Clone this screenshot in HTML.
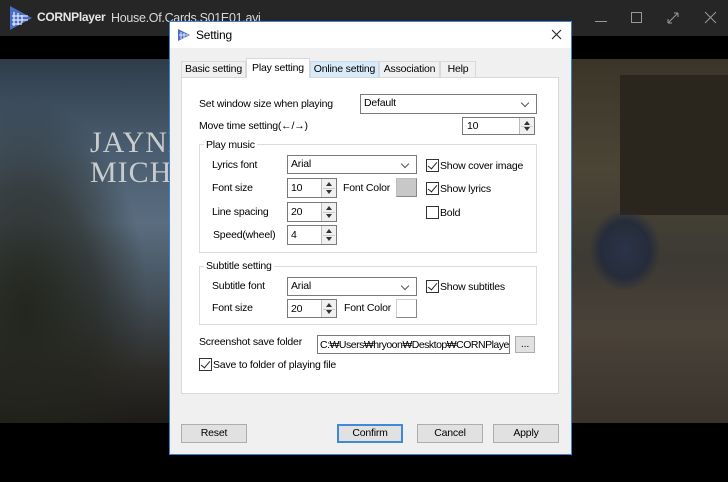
<!DOCTYPE html>
<html><head><meta charset="utf-8"><style>
*{box-sizing:border-box;margin:0;padding:0}
body{width:728px;height:482px;overflow:hidden;background:#000;position:relative;font-family:"Liberation Sans",sans-serif;font-size:10.5px;letter-spacing:-0.2px;color:#000}
.a{position:absolute}
.t{position:absolute;white-space:nowrap;line-height:13px}
.box{position:absolute;background:#fff;border:1px solid #7a7a7a}
.combo::after{content:"";position:absolute;right:8px;top:5px;width:5px;height:5px;border-right:1px solid #555;border-bottom:1px solid #555;transform:rotate(45deg)}
.spin{position:absolute;background:#fff;border:1px solid #7a7a7a}
.spin .b{position:absolute;right:0;top:0;width:15px;height:100%;border-left:1px solid #bbb;background:#f0f0f0}
.spin .b::before{content:"";position:absolute;left:4px;top:3px;border:3px solid transparent;border-bottom:4px solid #333;border-top:0}
.spin .b::after{content:"";position:absolute;left:4px;bottom:3px;border:3px solid transparent;border-top:4px solid #333;border-bottom:0}
.spin .b i{position:absolute;left:1px;right:1px;top:50%;border-top:1px solid #ccc}
.cb{position:absolute;width:13px;height:13px;border:1px solid #333;background:#fff}
.cb.on::after{content:"";position:absolute;left:3px;top:0px;width:4px;height:8px;border-right:1.5px solid #222;border-bottom:1.5px solid #222;transform:rotate(40deg)}
.grp{position:absolute;border:1px solid #dcdcdc}
.btn{position:absolute;background:#e1e1e1;border:1px solid #adadad;text-align:center;line-height:16px}
.tab{position:absolute;border:1px solid #d9d9d9;border-bottom:none;background:#f0f0f0;text-align:center;line-height:15px;white-space:nowrap;overflow:hidden}
</style></head><body>
<!-- top bar -->
<div class="a" style="left:0;top:0;width:728px;height:36px;background:#262626"></div>
<svg class="a" style="left:8px;top:4px" width="26" height="28" viewBox="0 0 26 28"><path d="M2 2 L24 14 L2 26 Z" fill="#4a6fc4"/><path d="M6 8 L6 22 M10 9 L10 21 M14 11 L14 19 M4 12 L20 12 M4 16 L20 16 M4 20 L14 20" stroke="#dfe8ff" stroke-width="1.3"/></svg>
<div class="t" style="left:37px;top:11px;color:#e6e6e6;font-size:12px;font-weight:bold;letter-spacing:-0.3px">CORNPlayer</div>
<div class="t" style="left:111px;top:12px;color:#d8d8d8;font-size:12.5px;letter-spacing:-0.3px">House.Of.Cards.S01E01.avi</div>
<div class="a" style="left:595px;top:21px;width:12px;border-top:1px solid #999"></div>
<div class="a" style="left:631px;top:12px;width:11px;height:11px;border:1px solid #999"></div>
<svg class="a" style="left:666px;top:11px" width="14" height="14"><path d="M2 12 L12 2 M2 12 L2 8 M2 12 L6 12 M12 2 L8 2 M12 2 L12 6" stroke="#999" fill="none"/></svg>
<svg class="a" style="left:704px;top:11px" width="13" height="13"><path d="M1 1 L12 12 M12 1 L1 12" stroke="#999"/></svg>
<!-- video -->
<div class="a" style="left:0;top:59px;width:728px;height:364px;background:linear-gradient(180deg,#2f3d4a 0%,#4a5d70 25%,#5a6d80 45%,#44505a 65%,#2e2c29 85%,#1d1b18 100%)"></div>
<div class="a" style="left:0;top:59px;width:170px;height:364px;background:radial-gradient(ellipse at 15% 70%,#23261d 0%,rgba(35,36,28,.6) 35%,transparent 60%)"></div>
<div class="a" style="left:572px;top:59px;width:156px;height:364px;background:linear-gradient(180deg,#3a3528 0%,#4b4536 30%,#3c3a33 55%,#4a4239 75%,#3a332c 100%)"></div>
<div class="a" style="left:620px;top:75px;width:108px;height:140px;background:#2a261d"></div>
<div class="a" style="left:590px;top:210px;width:70px;height:80px;background:radial-gradient(ellipse,#2a3448 0%,#262c3a 50%,transparent 72%)"></div>
<div class="t" style="left:90px;top:128px;color:#c9ccce;font-family:'Liberation Serif',serif;font-size:30px;line-height:30px;letter-spacing:1px">JAYNE<br>MICHI</div>
<!-- dialog -->
<div class="a" style="left:169px;top:21px;width:403px;height:434px;background:#f0f0f0;border:1px solid #3c80d0"></div>
<div class="a" style="left:170px;top:22px;width:401px;height:26px;background:#fff"></div>
<svg class="a" style="left:177px;top:28px" width="14" height="14" viewBox="0 0 14 14"><path d="M1 1 L13 7 L1 13 Z" fill="#4a6fc4"/><path d="M4 4 L4 11 M7 5 L7 10 M2 7 L11 7" stroke="#e6ecff"/></svg>
<div class="t" style="left:196px;top:29px;font-size:12px">Setting</div>
<svg class="a" style="left:551px;top:29px" width="11" height="11"><path d="M1 1 L10 10 M10 1 L1 10" stroke="#222" stroke-width="1.1"/></svg>
<!-- tabs -->
<div class="a" style="left:181px;top:77px;width:378px;height:317px;background:#fff;border:1px solid #d9d9d9"></div>
<div class="tab" style="left:181px;top:61px;width:65px;height:16px">Basic setting</div>
<div class="tab" style="left:246px;top:58px;width:64px;height:20px;background:#fff;line-height:19px">Play setting</div>
<div class="tab" style="left:310px;top:61px;width:69px;height:16px;background:#d9ebf9;border-color:#c5dcef">Online setting</div>
<div class="tab" style="left:379px;top:61px;width:61px;height:16px">Association</div>
<div class="tab" style="left:440px;top:61px;width:36px;height:16px">Help</div>
<!-- content -->
<div class="t" style="left:199px;top:98px">Set window size when playing</div>
<div class="box combo" style="left:360px;top:94px;width:177px;height:20px"><span class="t" style="left:3px;top:2px">Default</span></div>
<div class="t" style="left:199px;top:120px">Move time setting(←/→)</div>
<div class="spin" style="left:462px;top:117px;width:73px;height:18px"><span class="t" style="left:4px;top:2px">10</span><div class="b"><i></i></div></div>

<div class="grp" style="left:199px;top:144px;width:338px;height:109px"></div>
<div class="t" style="left:204px;top:139px;background:#fff;padding:0 2px">Play music</div>
<div class="t" style="left:212px;top:159px">Lyrics font</div>
<div class="box combo" style="left:287px;top:155px;width:130px;height:19px"><span class="t" style="left:3px;top:2px">Arial</span></div>
<div class="t" style="left:212px;top:182px">Font size</div>
<div class="spin" style="left:287px;top:178px;width:50px;height:20px"><span class="t" style="left:3px;top:3px">10</span><div class="b"><i></i></div></div>
<div class="t" style="left:343px;top:182px">Font Color</div>
<div class="a" style="left:396px;top:178px;width:21px;height:19px;background:#c8c8c8;border:1px solid #bdbdbd;border-right-color:#888;border-bottom-color:#888"></div>
<div class="t" style="left:212px;top:206px">Line spacing</div>
<div class="spin" style="left:287px;top:202px;width:50px;height:20px"><span class="t" style="left:3px;top:3px">20</span><div class="b"><i></i></div></div>
<div class="t" style="left:213px;top:229px">Speed(wheel)</div>
<div class="spin" style="left:287px;top:225px;width:50px;height:20px"><span class="t" style="left:3px;top:3px">4</span><div class="b"><i></i></div></div>
<div class="cb on" style="left:426px;top:159px"></div><div class="t" style="left:440px;top:160px">Show cover image</div>
<div class="cb on" style="left:426px;top:182px"></div><div class="t" style="left:440px;top:183px">Show lyrics</div>
<div class="cb" style="left:426px;top:206px"></div><div class="t" style="left:440px;top:207px">Bold</div>

<div class="grp" style="left:199px;top:266px;width:338px;height:59px"></div>
<div class="t" style="left:204px;top:260px;background:#fff;padding:0 2px">Subtitle setting</div>
<div class="t" style="left:212px;top:280px">Subtitle font</div>
<div class="box combo" style="left:287px;top:277px;width:130px;height:19px"><span class="t" style="left:3px;top:2px">Arial</span></div>
<div class="cb on" style="left:426px;top:280px"></div><div class="t" style="left:440px;top:281px">Show subtitles</div>
<div class="t" style="left:212px;top:302px">Font size</div>
<div class="spin" style="left:287px;top:299px;width:50px;height:19px"><span class="t" style="left:3px;top:3px">20</span><div class="b"><i></i></div></div>
<div class="t" style="left:344px;top:302px">Font Color</div>
<div class="a" style="left:396px;top:299px;width:21px;height:19px;background:#fff;border:1px solid #cfcfcf;border-right-color:#888;border-bottom-color:#888"></div>

<div class="t" style="left:199px;top:336px">Screenshot save folder</div>
<div class="box" style="left:317px;top:335px;width:193px;height:19px;overflow:hidden"><span class="t" style="left:2px;top:3px;letter-spacing:-0.5px">C:₩Users₩hryoon₩Desktop₩CORNPlayer</span></div>
<div class="btn" style="left:515px;top:336px;width:20px;height:17px;line-height:14px">...</div>
<div class="cb on" style="left:199px;top:358px"></div><div class="t" style="left:213px;top:359px">Save to folder of playing file</div>

<div class="btn" style="left:181px;top:424px;width:66px;height:19px">Reset</div>
<div class="btn" style="left:337px;top:424px;width:66px;height:19px;border:2px solid #3c8ad8;line-height:15px">Confirm</div>
<div class="btn" style="left:417px;top:424px;width:66px;height:19px">Cancel</div>
<div class="btn" style="left:493px;top:424px;width:66px;height:19px">Apply</div>
</body></html>
